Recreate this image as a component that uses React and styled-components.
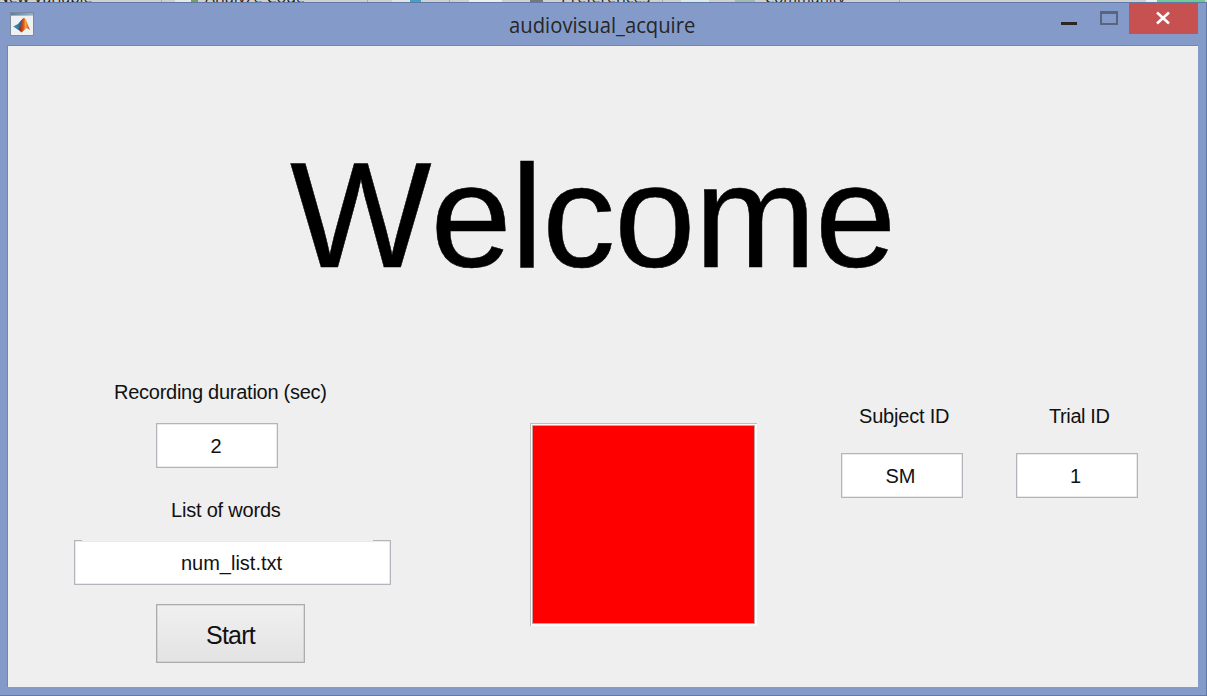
import React from 'react';
import styled, { createGlobalStyle } from 'styled-components';

const GlobalStyle = createGlobalStyle`
  * { box-sizing: border-box; }
  body { margin: 0; overflow: hidden; background: #849bc9; }
`;

const Desktop = styled.div`
  width: 1207px;
  height: 696px;
  display: flex;
  flex-direction: column;
  font-family: "Liberation Sans", Arial, sans-serif;
  color: #111;
`;

const BackStrip = styled.div`
  height: 2px;
  flex: none;
  overflow: hidden;
  display: flex;
  align-items: flex-end;
  background: #d0d0d0;
`;

const StripLabel = styled.span`
  font: ${(p) => p.$size ?? 15.5}px/20px "Open Sans", sans-serif;
  color: #222;
  white-space: nowrap;
  width: ${(p) => p.$width}px;
  margin-left: ${(p) => p.$gap}px;
  margin-bottom: -5px;
  flex: none;
`;

const StripMark = styled.i`
  flex: none;
  width: ${(p) => p.$width}px;
  height: 2px;
  margin-left: ${(p) => p.$gap}px;
  background: ${(p) => p.$color};
`;

const Window = styled.main`
  flex: 1;
  display: flex;
  flex-direction: column;
  background: #849bc9;
  border: solid #6179a6;
  border-width: 1px 1px 1px 0;
`;

const TitleBar = styled.header`
  height: 42px;
  flex: none;
  display: grid;
  grid-template-columns: 150px 1fr 150px;
  border-right: 8px solid #849bc9;
`;

const AppIcon = styled.svg`
  width: 24px;
  height: 24px;
  margin: 9px 0 0 10px;
`;

const Title = styled.h1`
  margin: 0;
  font: 400 22px/30px "Open Sans", "Segoe UI", sans-serif;
  color: #262626;
  text-align: center;
  padding: 6px 0 0 7px;
  transform: scaleX(0.92);
`;

const Controls = styled.div`
  display: flex;
  justify-content: flex-end;
  align-items: flex-start;
`;

const ControlButton = styled.button`
  border: 0;
  padding: 0;
  width: ${(p) => p.$width}px;
  height: 31px;
  background: ${(p) => (p.$danger ? '#c75050' : 'transparent')};
  svg { display: block; }
`;

const Client = styled.section`
  flex: 1;
  margin: 0 8px 8px 7px;
  border: solid #7186b4;
  border-width: 1px 0 0 1px;
  background: #efefef;
  display: flex;
  flex-direction: column;
`;

const Welcome = styled.h2`
  margin: 0;
  height: 377px;
  padding: 82px 0 0 282px;
  font-size: 150px;
  line-height: 174px;
  font-weight: 400;
  letter-spacing: -1px;
  white-space: nowrap;
  color: #000;
  -webkit-text-stroke: 0.5px #000;
  flex: none;
`;

const Lowercase = styled.span`
  font-size: 146px;
  line-height: 1;
  letter-spacing: -1px;
`;

const Panels = styled.div`
  display: flex;
  align-items: flex-start;
`;

const Recording = styled.div`
  width: 317px;
  margin: -43px 0 0 66px;
  display: flex;
  flex-direction: column;
`;

const Label = styled.label`
  font-size: 20px;
  line-height: 24px;
  letter-spacing: ${(p) => p.$spacing ?? -0.2}px;
  white-space: nowrap;
  margin-top: ${(p) => p.$above ?? 0}px;
  margin-left: ${(p) => p.$left}px;
  margin-bottom: ${(p) => p.$below}px;
`;

const Field = styled.input`
  width: ${(p) => p.$width ?? 122}px;
  height: 45px;
  padding: 2px ${(p) => p.$inset ?? 3}px 0 0;
  margin-left: ${(p) => p.$left ?? 0}px;
  border: 1px solid #b4b5bc;
  border-radius: 0;
  box-shadow: inset 0 0 0 0.5px #d4d5da;
  background: #fff;
  color: #111;
  font: 20px "Liberation Sans", Arial, sans-serif;
  text-align: center;
  outline: none;
`;

const WordList = styled.div`
  position: relative;
  display: flex;
  &::before {
    content: "";
    position: absolute;
    left: 8px;
    top: 0;
    width: 291px;
    height: 1px;
    background: #efefef;
  }
`;

const StartButton = styled.button`
  width: 149px;
  height: 59px;
  margin: 19px 0 0 82px;
  padding: 3px 0 0;
  border: 1px solid #acacac;
  box-shadow: inset 0 0 0 0.5px #c4c4c4;
  background: linear-gradient(#f0f0f0, #e3e3e3);
  font: 25px "Liberation Sans", Arial, sans-serif;
  letter-spacing: -0.8px;
  color: #111;
`;

const Signal = styled.div`
  width: 227px;
  height: 203px;
  margin-left: 139px;
  border: solid #bdbdbd;
  border-width: 1px 0 0 1px;
  padding: 2px;
  background: #fafafa;
  display: flex;
`;

const SignalLamp = styled.div`
  width: 221px;
  height: 197px;
  background: #f00;
  box-shadow: 0 0 0 1px #c9a3a3;
`;

const Identity = styled.div`
  display: flex;
  gap: 54px;
  margin: -19px 0 0 84px;
`;

const IdentityItem = styled.div`
  display: flex;
  flex-direction: column;
  width: 121px;
`;

export default function App() {
  return (
    <Desktop>
      <GlobalStyle />
      <BackStrip>
        <StripLabel $width={96} $gap={-3}>New Variable</StripLabel>
        <StripMark $width={1} $gap={68} $color="#aaa" />
        <StripMark $width={20} $gap={13} $color="#e6e9ec" />
        <StripMark $width={7} $gap={-4} $color="#73a05c" />
        <StripLabel $width={101} $gap={7} $size={16}>Analyze Code</StripLabel>
        <StripMark $width={1} $gap={61} $color="#aaa" />
        <StripMark $width={18} $gap={24} $color="#e2e5e8" />
        <StripMark $width={11} $gap={0} $color="#459fc4" />
        <StripMark $width={1} $gap={28} $color="#aaa" />
        <StripMark $width={33} $gap={19} $color="#eee" />
        <StripMark $width={13} $gap={28} $color="#777" />
        <StripLabel $width={88} $gap={18} $size={16}>Preferences</StripLabel>
        <StripMark $width={1} $gap={13} $color="#aaa" />
        <StripMark $width={28} $gap={18} $color="#dceaf0" />
        <StripMark $width={20} $gap={26} $color="#a6b7b5" />
        <StripLabel $width={79} $gap={10} $size={14.8}>Community</StripLabel>
        <StripMark $width={1} $gap={55} $color="#aaa" />
        <StripMark $width={11} $gap={246} $color="#eee" />
        <StripMark $width={48} $gap={0} $color="#75c794" />
      </BackStrip>
      <Window>
        <TitleBar>
          <AppIcon viewBox="0 0 24 24">
            <defs>
              <linearGradient id="bar" x1="0" x2="1">
                <stop offset="0" stopColor="#557fa5" />
                <stop offset="1" stopColor="#91b4d2" />
              </linearGradient>
              <linearGradient id="blade" x1="0" x2="1">
                <stop offset="0" stopColor="#44a0c8" />
                <stop offset="1" stopColor="#244a7c" />
              </linearGradient>
              <linearGradient id="peak" x1="0" x2="1">
                <stop offset="0" stopColor="#6d1c22" />
                <stop offset="0.45" stopColor="#e2571c" />
                <stop offset="0.62" stopColor="#f5a52b" />
                <stop offset="1" stopColor="#bf3d23" />
              </linearGradient>
            </defs>
            <rect x="0.5" y="0.5" width="23" height="23" fill="#eef0f2" stroke="#7d899b" />
            <rect x="1" y="1" width="22" height="2.6" fill="url(#bar)" />
            <path d="M3 14.5 8 12 10.5 9 13.5 6 11.5 14 8.5 18Z" fill="url(#blade)" />
            <path d="M8.3 17.5C11 15.5 12 6 14 5.8 16 6 18 14 20 18L16.7 16 11.5 20.5Z" fill="url(#peak)" />
          </AppIcon>
          <Title>audiovisual_acquire</Title>
          <Controls>
            <ControlButton $width={40} aria-label="Minimize">
              <svg width="40" height="31"><path d="M12 19h16v3H12z" fill="#2b2626" /></svg>
            </ControlButton>
            <ControlButton $width={40} aria-label="Maximize">
              <svg width="40" height="31"><path d="M11 8h18v14H11z M13 11v9h14v-9z" fill="#59647f" fillRule="evenodd" /></svg>
            </ControlButton>
            <ControlButton $width={69} $danger aria-label="Close">
              <svg width="69" height="31"><path d="M28 9.5 40 20.5M40 9.5 28 20.5" stroke="#fff" strokeWidth="2.6" /></svg>
            </ControlButton>
          </Controls>
        </TitleBar>
        <Client>
          <Welcome>W<Lowercase>elcome</Lowercase></Welcome>
          <Panels>
            <Recording>
              <Label $left={40} $below={19} $spacing={-0.26}>Recording duration (sec)</Label>
              <Field $left={82} $inset={2} defaultValue="2" />
              <Label $left={97} $above={30} $below={18}>List of words</Label>
              <WordList><Field $width={317} $inset={2} defaultValue="num_list.txt" /></WordList>
              <StartButton>Start</StartButton>
            </Recording>
            <Signal><SignalLamp /></Signal>
            <Identity>
              <IdentityItem>
                <Label $left={18} $below={25}>Subject ID</Label>
                <Field defaultValue="SM" />
              </IdentityItem>
              <IdentityItem>
                <Label $left={33} $below={25} $spacing={-0.4}>Trial ID</Label>
                <Field defaultValue="1" />
              </IdentityItem>
            </Identity>
          </Panels>
        </Client>
      </Window>
    </Desktop>
  );
}
